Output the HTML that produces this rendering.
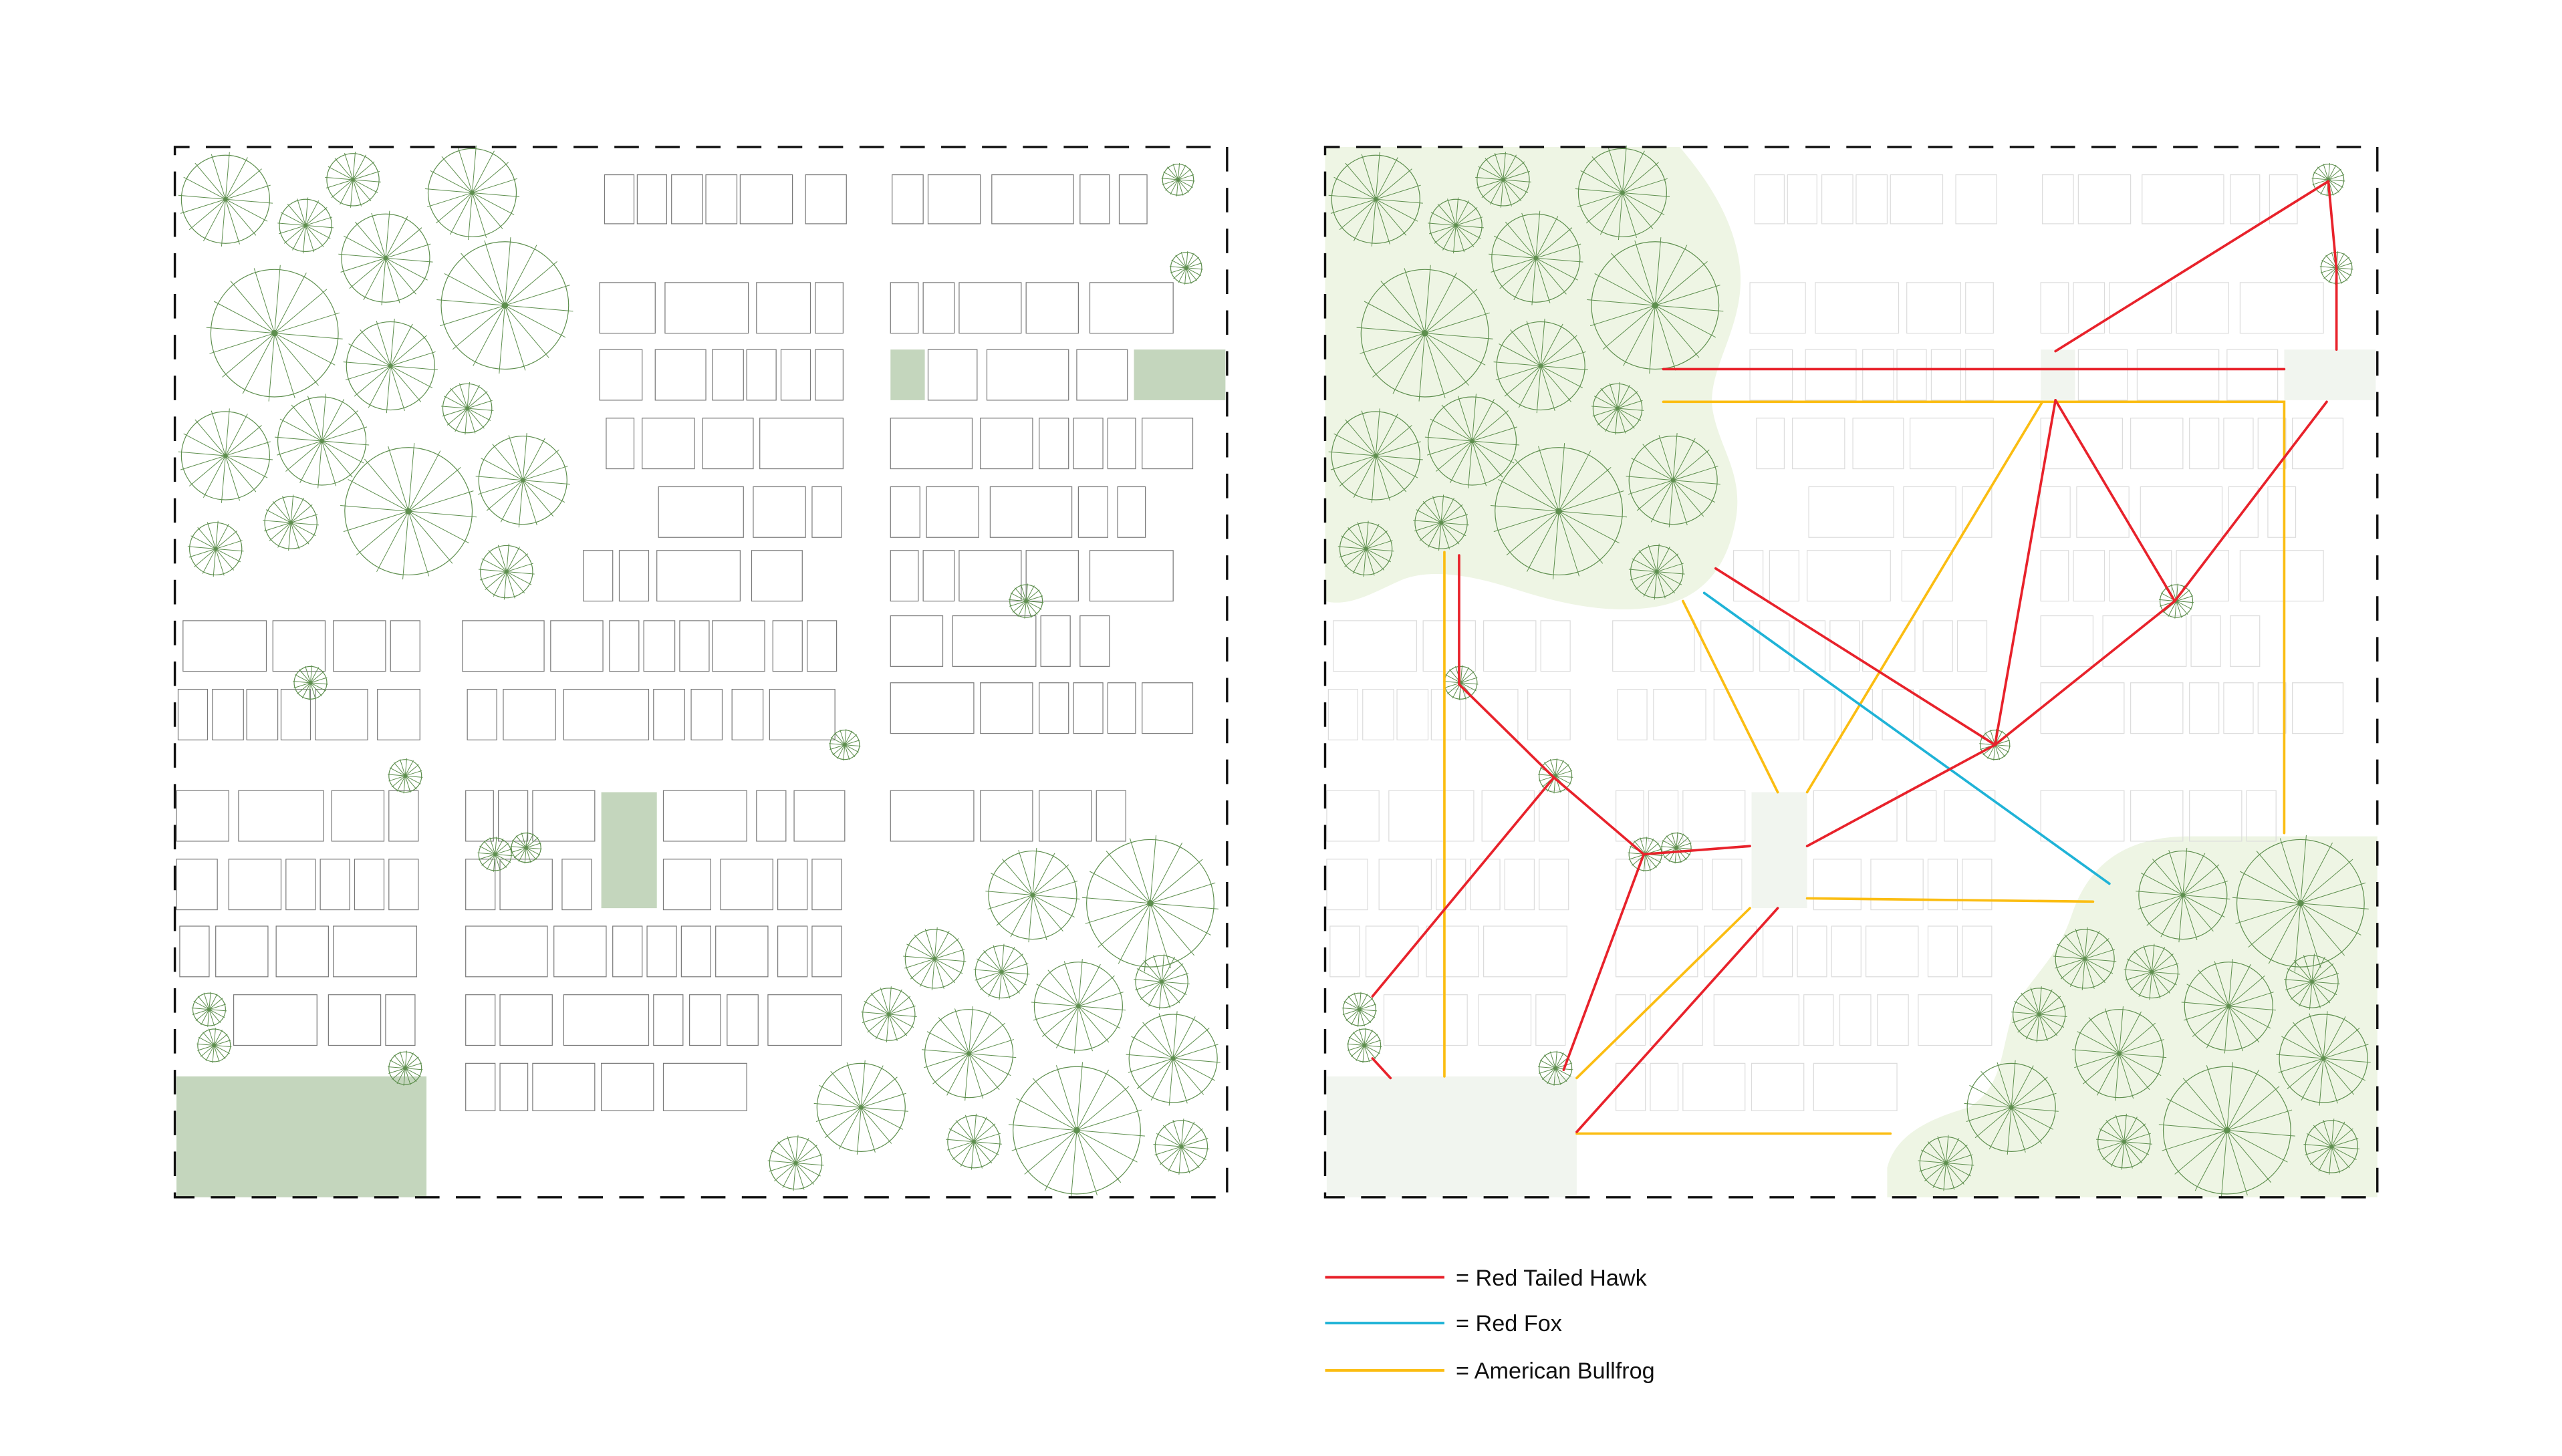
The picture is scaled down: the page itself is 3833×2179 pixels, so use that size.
<!DOCTYPE html>
<html><head><meta charset="utf-8"><style>
html,body{margin:0;padding:0;background:#fff;}
svg{display:block;}
</style></head><body>
<svg width="3833" height="2179" viewBox="0 0 1568 891.4" xmlns="http://www.w3.org/2000/svg">
<defs>
<g id="t" fill="none" stroke="#5e8f4e">
<circle r="1" vector-effect="non-scaling-stroke" stroke-width="1.2"/>
<path vector-effect="non-scaling-stroke" stroke-width="1" d="M-1.07,-0.09L1.07,0.09M-0.95,-0.5L0.95,0.5M-0.69,-0.82L0.69,0.82M-0.32,-1.02L0.32,1.02M0.09,-1.07L-0.09,1.07M0.5,-0.95L-0.5,0.95M0.82,-0.69L-0.82,0.69M1.02,-0.32L-1.02,0.32"/>
<circle r="0.05" fill="#5e8f4e" stroke="none"/>
</g>
<g id="trees">
<use href="#t" transform="translate(138,122) scale(27)"/>
<use href="#t" transform="translate(187,138) scale(16)"/>
<use href="#t" transform="translate(216,110) scale(16)"/>
<use href="#t" transform="translate(289,118) scale(27)"/>
<use href="#t" transform="translate(236,158) scale(27)"/>
<use href="#t" transform="translate(168,204) scale(39)"/>
<use href="#t" transform="translate(309,187) scale(39)"/>
<use href="#t" transform="translate(239,224) scale(27)"/>
<use href="#t" transform="translate(286,250) scale(15)"/>
<use href="#t" transform="translate(138,279) scale(27)"/>
<use href="#t" transform="translate(197,270) scale(27)"/>
<use href="#t" transform="translate(250,313) scale(39)"/>
<use href="#t" transform="translate(320,294) scale(27)"/>
<use href="#t" transform="translate(178,320) scale(16)"/>
<use href="#t" transform="translate(132,336) scale(16)"/>
<use href="#t" transform="translate(310,350) scale(16)"/>
<use href="#t" transform="translate(721,110) scale(9.5)"/>
<use href="#t" transform="translate(726,164) scale(9.5)"/>
<use href="#t" transform="translate(628,368) scale(10)"/>
<use href="#t" transform="translate(190,418) scale(10)"/>
<use href="#t" transform="translate(517,456) scale(9)"/>
<use href="#t" transform="translate(248,475) scale(10)"/>
<use href="#t" transform="translate(303,523) scale(10)"/>
<use href="#t" transform="translate(322,519) scale(9)"/>
<use href="#t" transform="translate(632,548) scale(27)"/>
<use href="#t" transform="translate(704,553) scale(39)"/>
<use href="#t" transform="translate(572,587) scale(18)"/>
<use href="#t" transform="translate(613,595) scale(16)"/>
<use href="#t" transform="translate(711,601) scale(16)"/>
<use href="#t" transform="translate(660,616) scale(27)"/>
<use href="#t" transform="translate(544,621) scale(16)"/>
<use href="#t" transform="translate(593,645) scale(27)"/>
<use href="#t" transform="translate(718,648) scale(27)"/>
<use href="#t" transform="translate(128,618) scale(10)"/>
<use href="#t" transform="translate(131,640) scale(10)"/>
<use href="#t" transform="translate(248,654) scale(10)"/>
<use href="#t" transform="translate(527,678) scale(27)"/>
<use href="#t" transform="translate(659,692) scale(39)"/>
<use href="#t" transform="translate(596,699) scale(16)"/>
<use href="#t" transform="translate(723,702) scale(16)"/>
<use href="#t" transform="translate(487,712) scale(16)"/>
</g>
<g id="bld" fill="none" stroke-width="0.5">
<rect x="370" y="107" width="18" height="30"/><rect x="390" y="107" width="18" height="30"/><rect x="411" y="107" width="19" height="30"/><rect x="432" y="107" width="19" height="30"/><rect x="453" y="107" width="32" height="30"/><rect x="493" y="107" width="25" height="30"/>
<rect x="546" y="107" width="19" height="30"/><rect x="568" y="107" width="32" height="30"/><rect x="607" y="107" width="50" height="30"/><rect x="661" y="107" width="18" height="30"/><rect x="685" y="107" width="17" height="30"/>
<rect x="367" y="173" width="34" height="31"/><rect x="407" y="173" width="51" height="31"/><rect x="463" y="173" width="33" height="31"/><rect x="499" y="173" width="17" height="31"/>
<rect x="545" y="173" width="17" height="31"/><rect x="565" y="173" width="19" height="31"/><rect x="587" y="173" width="38" height="31"/><rect x="628" y="173" width="32" height="31"/><rect x="667" y="173" width="51" height="31"/>
<rect x="367" y="214" width="26" height="31"/><rect x="401" y="214" width="31" height="31"/><rect x="436" y="214" width="19" height="31"/><rect x="457" y="214" width="18" height="31"/><rect x="478" y="214" width="18" height="31"/><rect x="499" y="214" width="17" height="31"/>
<rect x="568" y="214" width="30" height="31"/><rect x="604" y="214" width="50" height="31"/><rect x="659" y="214" width="31" height="31"/>
<rect x="371" y="256" width="17" height="31"/><rect x="393" y="256" width="32" height="31"/><rect x="430" y="256" width="31" height="31"/><rect x="465" y="256" width="51" height="31"/>
<rect x="545" y="256" width="50" height="31"/><rect x="600" y="256" width="32" height="31"/><rect x="636" y="256" width="18" height="31"/><rect x="657" y="256" width="18" height="31"/><rect x="678" y="256" width="17" height="31"/><rect x="699" y="256" width="31" height="31"/>
<rect x="403" y="298" width="52" height="31"/><rect x="461" y="298" width="32" height="31"/><rect x="497" y="298" width="18" height="31"/>
<rect x="545" y="298" width="18" height="31"/><rect x="567" y="298" width="32" height="31"/><rect x="606" y="298" width="50" height="31"/><rect x="660" y="298" width="18" height="31"/><rect x="684" y="298" width="17" height="31"/>
<rect x="357" y="337" width="18" height="31"/><rect x="379" y="337" width="18" height="31"/><rect x="402" y="337" width="51" height="31"/><rect x="460" y="337" width="31" height="31"/>
<rect x="545" y="337" width="17" height="31"/><rect x="565" y="337" width="19" height="31"/><rect x="587" y="337" width="38" height="31"/><rect x="628" y="337" width="32" height="31"/><rect x="667" y="337" width="51" height="31"/>
<rect x="112" y="380" width="51" height="31"/><rect x="167" y="380" width="32" height="31"/><rect x="204" y="380" width="32" height="31"/><rect x="239" y="380" width="18" height="31"/>
<rect x="283" y="380" width="50" height="31"/><rect x="337" y="380" width="32" height="31"/><rect x="373" y="380" width="18" height="31"/><rect x="394" y="380" width="19" height="31"/><rect x="416" y="380" width="18" height="31"/><rect x="436" y="380" width="32" height="31"/><rect x="473" y="380" width="18" height="31"/><rect x="494" y="380" width="18" height="31"/>
<rect x="545" y="377" width="32" height="31"/><rect x="583" y="377" width="51" height="31"/><rect x="637" y="377" width="18" height="31"/><rect x="661" y="377" width="18" height="31"/>
<rect x="109" y="422" width="18" height="31"/><rect x="130" y="422" width="19" height="31"/><rect x="151" y="422" width="19" height="31"/><rect x="172" y="422" width="18" height="31"/><rect x="193" y="422" width="32" height="31"/><rect x="231" y="422" width="26" height="31"/>
<rect x="286" y="422" width="18" height="31"/><rect x="308" y="422" width="32" height="31"/><rect x="345" y="422" width="52" height="31"/><rect x="400" y="422" width="19" height="31"/><rect x="423" y="422" width="19" height="31"/><rect x="448" y="422" width="19" height="31"/><rect x="471" y="422" width="40" height="31"/>
<rect x="545" y="418" width="51" height="31"/><rect x="600" y="418" width="32" height="31"/><rect x="636" y="418" width="18" height="31"/><rect x="657" y="418" width="18" height="31"/><rect x="678" y="418" width="17" height="31"/><rect x="699" y="418" width="31" height="31"/>
<rect x="108" y="484" width="32" height="31"/><rect x="146" y="484" width="52" height="31"/><rect x="203" y="484" width="32" height="31"/><rect x="238" y="484" width="18" height="31"/>
<rect x="285" y="484" width="17" height="31"/><rect x="305" y="484" width="18" height="31"/><rect x="326" y="484" width="38" height="31"/><rect x="406" y="484" width="51" height="31"/><rect x="463" y="484" width="18" height="31"/><rect x="486" y="484" width="31" height="31"/>
<rect x="545" y="484" width="51" height="31"/><rect x="600" y="484" width="32" height="31"/><rect x="636" y="484" width="32" height="31"/><rect x="671" y="484" width="18" height="31"/>
<rect x="108" y="526" width="25" height="31"/><rect x="140" y="526" width="32" height="31"/><rect x="175" y="526" width="18" height="31"/><rect x="196" y="526" width="18" height="31"/><rect x="217" y="526" width="18" height="31"/><rect x="238" y="526" width="18" height="31"/>
<rect x="285" y="526" width="18" height="31"/><rect x="306" y="526" width="32" height="31"/><rect x="344" y="526" width="18" height="31"/><rect x="406" y="526" width="29" height="31"/><rect x="441" y="526" width="32" height="31"/><rect x="476" y="526" width="18" height="31"/><rect x="497" y="526" width="18" height="31"/>
<rect x="110" y="567" width="18" height="31"/><rect x="132" y="567" width="32" height="31"/><rect x="169" y="567" width="32" height="31"/><rect x="204" y="567" width="51" height="31"/>
<rect x="285" y="567" width="50" height="31"/><rect x="339" y="567" width="32" height="31"/><rect x="375" y="567" width="18" height="31"/><rect x="396" y="567" width="18" height="31"/><rect x="417" y="567" width="18" height="31"/><rect x="438" y="567" width="32" height="31"/><rect x="476" y="567" width="18" height="31"/><rect x="497" y="567" width="18" height="31"/>
<rect x="143" y="609" width="51" height="31"/><rect x="201" y="609" width="32" height="31"/><rect x="236" y="609" width="18" height="31"/>
<rect x="285" y="609" width="18" height="31"/><rect x="306" y="609" width="32" height="31"/><rect x="345" y="609" width="52" height="31"/><rect x="400" y="609" width="18" height="31"/><rect x="422" y="609" width="19" height="31"/><rect x="445" y="609" width="19" height="31"/><rect x="470" y="609" width="45" height="31"/>
<rect x="285" y="651" width="18" height="29"/><rect x="306" y="651" width="17" height="29"/><rect x="326" y="651" width="38" height="29"/><rect x="368" y="651" width="32" height="29"/><rect x="406" y="651" width="51" height="29"/>
</g>
</defs>

<g fill="#c4d6bd">
<rect x="545" y="214" width="21" height="31"/>
<rect x="694" y="214" width="56" height="31"/>
<rect x="368" y="485" width="34" height="71"/>
<rect x="108" y="659" width="153" height="74"/>
</g>
<use href="#bld" stroke="#7a7a7a"/>
<use href="#trees"/>
<rect x="107" y="90" width="644" height="643" fill="none" stroke="#111" stroke-width="1.4" stroke-dasharray="15 10" stroke-dashoffset="6"/>

<g fill="#eef5e4">
<path d="M811,90 L1028,90 C1045,110 1062,135 1065,165 C1068,200 1045,225 1048,250 C1052,275 1068,290 1062,320 C1056,350 1040,368 1010,372 C980,376 950,368 925,360 C900,352 875,348 858,355 C842,362 826,372 811,368 Z"/>
<path d="M1455,512 L1340,512 C1300,512 1278,530 1268,560 C1258,590 1240,600 1232,620 C1224,645 1226,665 1205,678 C1180,685 1160,695 1155,715 L1155,733 L1455,733 Z"/>
</g>
<g fill="#f1f5ef">
<rect x="1249" y="214" width="21" height="31"/>
<rect x="1398" y="214" width="56" height="31"/>
<rect x="1072" y="485" width="34" height="71"/>
<rect x="812" y="659" width="153" height="74"/>
</g>
<use href="#bld" stroke="#dcdcdc" transform="translate(704,0)"/>
<use href="#trees" transform="translate(704,0)"/>

<g fill="none" stroke-width="1.5" stroke-linecap="round">
<g stroke="#fbbd12">
<path d="M1018,246 L1398,246 L1398,510"/>
<path d="M884,338 L884,659"/>
<path d="M1030,368 L1088,485"/>
<path d="M1106,485 L1250,246"/>
<path d="M965,660 L1071,556"/>
<path d="M1106,550 L1281,552"/>
<path d="M965,694 L1157,694"/>
</g>
<path stroke="#1fb3d7" d="M1043,363 L1291,541"/>
<g stroke="#e8222b">
<path d="M1425,111 L1258,215"/>
<path d="M1425,111 L1430,165 L1430,214"/>
<path d="M1018,226 L1398,226"/>
<path d="M1258,245 L1221,456"/>
<path d="M1258,245 L1331,368"/>
<path d="M1424,246 L1331,368 L1221,456"/>
<path d="M1050,348 L1221,456 L1106,518"/>
<path d="M893,340 L893,419 L951,476 L840,610"/>
<path d="M951,476 L1006,523 L1071,518"/>
<path d="M1006,523 L957,655"/>
<path d="M1088,556 L965,693"/>
<path d="M840,648 L851,660"/>
</g>
</g>
<rect x="811" y="90" width="644" height="643" fill="none" stroke="#111" stroke-width="1.4" stroke-dasharray="15 10" stroke-dashoffset="6"/>

<g stroke-width="1.6">
<line x1="811" y1="782" x2="884" y2="782" stroke="#e8222b"/>
<line x1="811" y1="810" x2="884" y2="810" stroke="#1fb3d7"/>
<line x1="811" y1="839" x2="884" y2="839" stroke="#fbbd12"/>
</g>
<g font-family="Liberation Sans, sans-serif" font-size="14" fill="#111">
<text x="891" y="787">= Red Tailed Hawk</text>
<text x="891" y="815">= Red Fox</text>
<text x="891" y="844">= American Bullfrog</text>
</g>
</svg>
</body></html>
